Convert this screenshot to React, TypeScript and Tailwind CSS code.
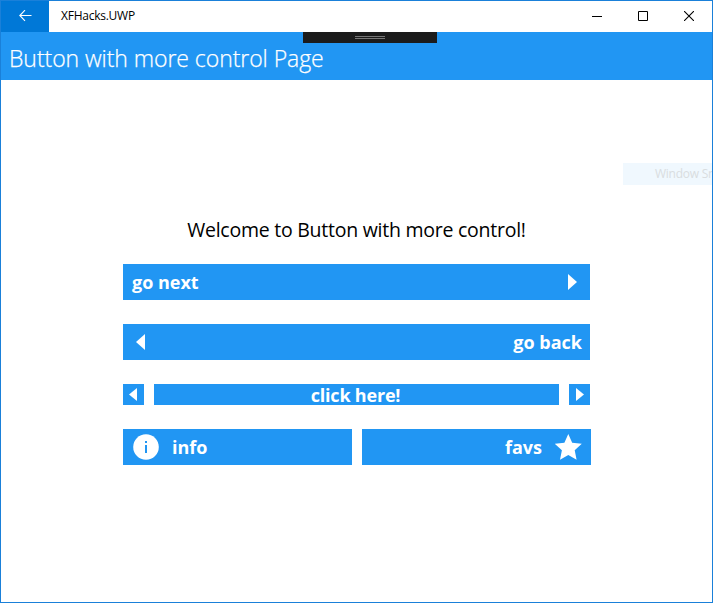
import React from "react";

const Triangle = ({ left = false, small = false }: { left?: boolean; small?: boolean }) => (
  <svg
    width={small ? 8 : 9}
    height={small ? 13 : 16}
    viewBox="0 0 9 16"
    preserveAspectRatio="none"
    className={left ? "block shrink-0" : "block shrink-0 rotate-180"}
  >
    <path d="M9 0V16L0 8Z" fill="white" />
  </svg>
);

const label = "text-[18px] leading-[24px] font-bold whitespace-nowrap";

export default function App() {
  return (
    <div className="relative flex h-[603px] w-[713px] flex-col overflow-hidden border border-[#1a80d9] bg-white font-['Open_Sans','Noto_Sans',sans-serif] text-black">
      <header className="flex h-[31px] shrink-0 items-stretch">
        <button className="flex w-12 items-center justify-center bg-[#0078d7] pb-px" aria-label="Back">
          <svg width="13" height="12" viewBox="0 0 13 12" fill="none" stroke="white" strokeWidth="1.1" className="block">
            <path d="M12.5 5.5H1M6 .2L.8 5.5L6 10.8" />
          </svg>
        </button>
        <div className="flex flex-1 items-center pb-px pl-3 text-[12px] leading-4">
          <span className="tracking-[-0.25px]">XFHacks.UWP</span>
        </div>
        <div className="flex w-[138px] [&>button]:flex [&>button]:w-[46px] [&>button]:items-center [&>button]:justify-center [&>button]:pb-px">
          <button aria-label="Minimize">
            <svg width="10" height="10" viewBox="0 0 10 10" className="block" shapeRendering="crispEdges">
              <path d="M0 5H10V6H0Z" />
            </svg>
          </button>
          <button aria-label="Maximize">
            <svg width="10" height="10" viewBox="0 0 10 10" fill="none" stroke="black" className="block">
              <path d="M.5 .5H9.5V9.5H.5Z" />
            </svg>
          </button>
          <button aria-label="Close">
            <svg width="10" height="10" viewBox="0 0 10 10" fill="none" stroke="black" strokeWidth="1.1" className="block">
              <path d="M0 0L10 10M10 0L0 10" />
            </svg>
          </button>
        </div>
      </header>

      <div className="flex h-12 shrink-0 items-center bg-[#2196f3] pl-2 text-white">
        <h1 className="pt-[3px] text-[23px] leading-8 font-light tracking-[-0.06px] whitespace-nowrap [-webkit-text-stroke:0.25px_white]">Button with more control Page</h1>
      </div>

      <main className="flex flex-1 flex-col pt-[136px] pl-[122px]">
        <p className="flex h-7 w-[467px] items-center justify-center text-[19.5px] tracking-[-0.25px] whitespace-nowrap">
          <span>Welcome to Button with more control!</span>
        </p>
        <div className="mt-5 flex w-[468px] flex-col gap-6 text-white">
          <button className="flex h-9 w-[467px] items-center justify-between bg-[#2196f3] pr-[13px] pl-[9px]">
            <span className={label}>go next</span>
            <Triangle />
          </button>
          <button className="flex h-9 w-[467px] items-center justify-between bg-[#2196f3] pr-2 pl-[13px]">
            <Triangle left />
            <span className={label}>go back</span>
          </button>
          <div className="flex h-[21px] w-[467px] gap-[10px]">
            <button className="flex w-[21px] items-center bg-[#2196f3] pl-[6px]" aria-label="Previous">
              <Triangle left small />
            </button>
            <button className="flex flex-1 items-center justify-center bg-[#2196f3] pr-[2px]">
              <span className={`${label} tracking-[-0.2px]`}>click here!</span>
            </button>
            <button className="flex w-[21px] items-center bg-[#2196f3] pl-[7px]" aria-label="Next">
              <Triangle small />
            </button>
          </div>
          <div className="flex h-9 gap-[10px]">
            <button className="flex w-[229px] items-center bg-[#2196f3] pl-[10px]">
              <svg width="26" height="26" viewBox="0 0 26 26" className="block">
                <circle cx="13" cy="13" r="12.8" fill="white" />
                <path d="M12 7H14V9H12ZM12 11H14V19H12Z" fill="#2196f3" />
              </svg>
              <span className={`${label} ml-[13px]`}>info</span>
            </button>
            <button className="flex w-[229px] items-center justify-end bg-[#2196f3] pr-[9px]">
              <span className={`${label} mr-[13px]`}>favs</span>
              <svg width="27" height="26" viewBox="0 0 27 26" className="block">
                <path d="M13.3 0L17.2 8.8L26.8 9.8L19.7 16.3L21.6 25.8L13.3 21L5 25.8L6.9 16.3L-.2 9.8L9.4 8.8Z" fill="white" />
              </svg>
            </button>
          </div>
        </div>
      </main>

      <div className="absolute top-[31px] left-[302px] flex h-[11px] w-[134px] flex-col items-center justify-center gap-px bg-[#1b1b1b]">
        <i className="h-px w-[30px] bg-[#777]" />
        <i className="h-px w-[30px] bg-[#777]" />
      </div>
      <div className="absolute top-[162px] left-[622px] h-[22px] w-[89px] bg-[#f0f8fe] pl-8 text-[12px] leading-[22px] tracking-[-0.25px] whitespace-nowrap text-[#d9dde0]">
        Window Sn
      </div>
    </div>
  );
}
